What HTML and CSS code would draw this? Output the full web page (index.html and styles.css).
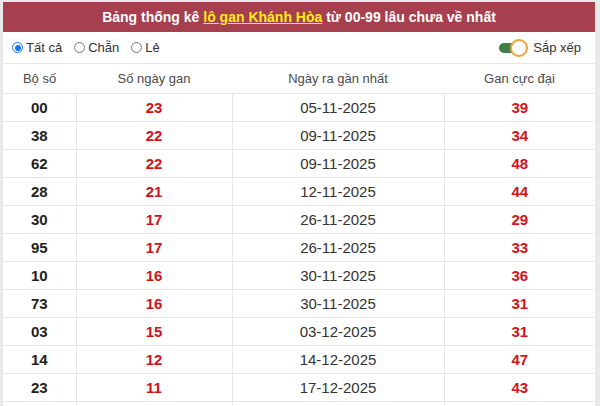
FILE: index.html
```html
<!DOCTYPE html>
<html lang="vi">
<head>
<meta charset="utf-8">
<link rel="stylesheet" href="styles.css">
</head>
<body>
<div class="box">
  <div class="title">Bảng thống kê <a href="#">lô gan Khánh Hòa</a> từ 00-99 lâu chưa về nhất</div>
  <div class="filters">
    <div class="radios">
      <label class="opt"><span class="radio on"></span>Tất cả</label>
      <label class="opt"><span class="radio"></span>Chẵn</label>
      <label class="opt"><span class="radio"></span>Lẻ</label>
    </div>
    <div class="sort"><span class="toggle"><span class="knob"></span></span>Sắp xếp</div>
  </div>
  <table class="tbl">
    <colgroup><col class="c1"><col class="c2"><col class="c3"><col class="c4"></colgroup>
    <thead>
      <tr><th>Bộ số</th><th>Số ngày gan</th><th>Ngày ra gần nhất</th><th>Gan cực đại</th></tr>
    </thead>
    <tbody>
      <tr><td class="num">00</td><td class="red">23</td><td>05-11-2025</td><td class="red">39</td></tr>
      <tr><td class="num">38</td><td class="red">22</td><td>09-11-2025</td><td class="red">34</td></tr>
      <tr><td class="num">62</td><td class="red">22</td><td>09-11-2025</td><td class="red">48</td></tr>
      <tr><td class="num">28</td><td class="red">21</td><td>12-11-2025</td><td class="red">44</td></tr>
      <tr><td class="num">30</td><td class="red">17</td><td>26-11-2025</td><td class="red">29</td></tr>
      <tr><td class="num">95</td><td class="red">17</td><td>26-11-2025</td><td class="red">33</td></tr>
      <tr><td class="num">10</td><td class="red">16</td><td>30-11-2025</td><td class="red">36</td></tr>
      <tr><td class="num">73</td><td class="red">16</td><td>30-11-2025</td><td class="red">31</td></tr>
      <tr><td class="num">03</td><td class="red">15</td><td>03-12-2025</td><td class="red">31</td></tr>
      <tr><td class="num">14</td><td class="red">12</td><td>14-12-2025</td><td class="red">47</td></tr>
      <tr><td class="num">23</td><td class="red">11</td><td>17-12-2025</td><td class="red">43</td></tr>
      <tr><td class="num">&nbsp;</td><td class="red">&nbsp;</td><td>&nbsp;</td><td class="red">&nbsp;</td></tr>
    </tbody>
  </table>
</div>
</body>
</html>
```
FILE: styles.css
```css
html, body {
  margin: 0;
  padding: 0;
  background: #e9e9e9;
  height: 406px;
  overflow: hidden;
}
body {
  padding: 2px 5px 0 3px;
  font-family: "Liberation Sans", Arial, sans-serif;
}
.box {
  background: #fff;
}
.title {
  height: 30px;
  line-height: 30px;
  background: #a63f4e;
  color: #fff;
  font-weight: bold;
  font-size: 14px;
  text-align: center;
}
.title a {
  color: #ffeb1a;
  text-decoration: underline;
}
.filters {
  height: 31px;
  border-bottom: 1px solid #e6e6e6;
  display: flex;
  align-items: center;
  justify-content: space-between;
  padding: 0 14px 0 9px;
  font-size: 13px;
  color: #333;
}
.radios {
  display: flex;
  gap: 12px;
}
.opt {
  display: flex;
  align-items: center;
  gap: 3px;
}
.radio {
  width: 11px;
  height: 11px;
  border: 1px solid #777;
  border-radius: 50%;
  box-sizing: border-box;
  background: #fff;
  position: relative;
}
.radio.on {
  border: 1px solid #1a73e8;
}
.radio.on::after {
  content: "";
  position: absolute;
  left: 1.5px;
  top: 1.5px;
  width: 6px;
  height: 6px;
  border-radius: 50%;
  background: #1a73e8;
}
.sort {
  display: flex;
  align-items: center;
  gap: 4px;
}
.toggle {
  width: 26px;
  height: 10px;
  background: #3f7e46;
  border-radius: 5px;
  position: relative;
  margin-right: 4px;
}
.knob {
  position: absolute;
  right: -3px;
  top: -4px;
  width: 18px;
  height: 18px;
  border-radius: 50%;
  background: #fff;
  border: 2px solid #f0a33a;
  box-sizing: border-box;
}
.tbl {
  width: 100%;
  border-collapse: collapse;
  table-layout: fixed;
}
.c1 { width: 73px; }
.c2 { width: 156px; }
.c3 { width: 212px; }
.c4 { width: auto; }
.tbl th {
  height: 29px;
  font-weight: normal;
  font-size: 13px;
  color: #4a4a4a;
  border-bottom: 1px solid #e6e6e6;
  padding: 0;
}
.tbl td {
  height: 27px;
  padding: 0;
  text-align: center;
  font-size: 15px;
  color: #333;
  border: 1px solid #e6e6e6;
  border-top: 0;
}
.tbl td:first-child { border-left: 0; }
.tbl td:last-child { border-right: 0; }
.tbl td.num {
  font-weight: bold;
  color: #222;
}
.tbl td.red {
  font-weight: bold;
  color: #d0121b;
}
```
